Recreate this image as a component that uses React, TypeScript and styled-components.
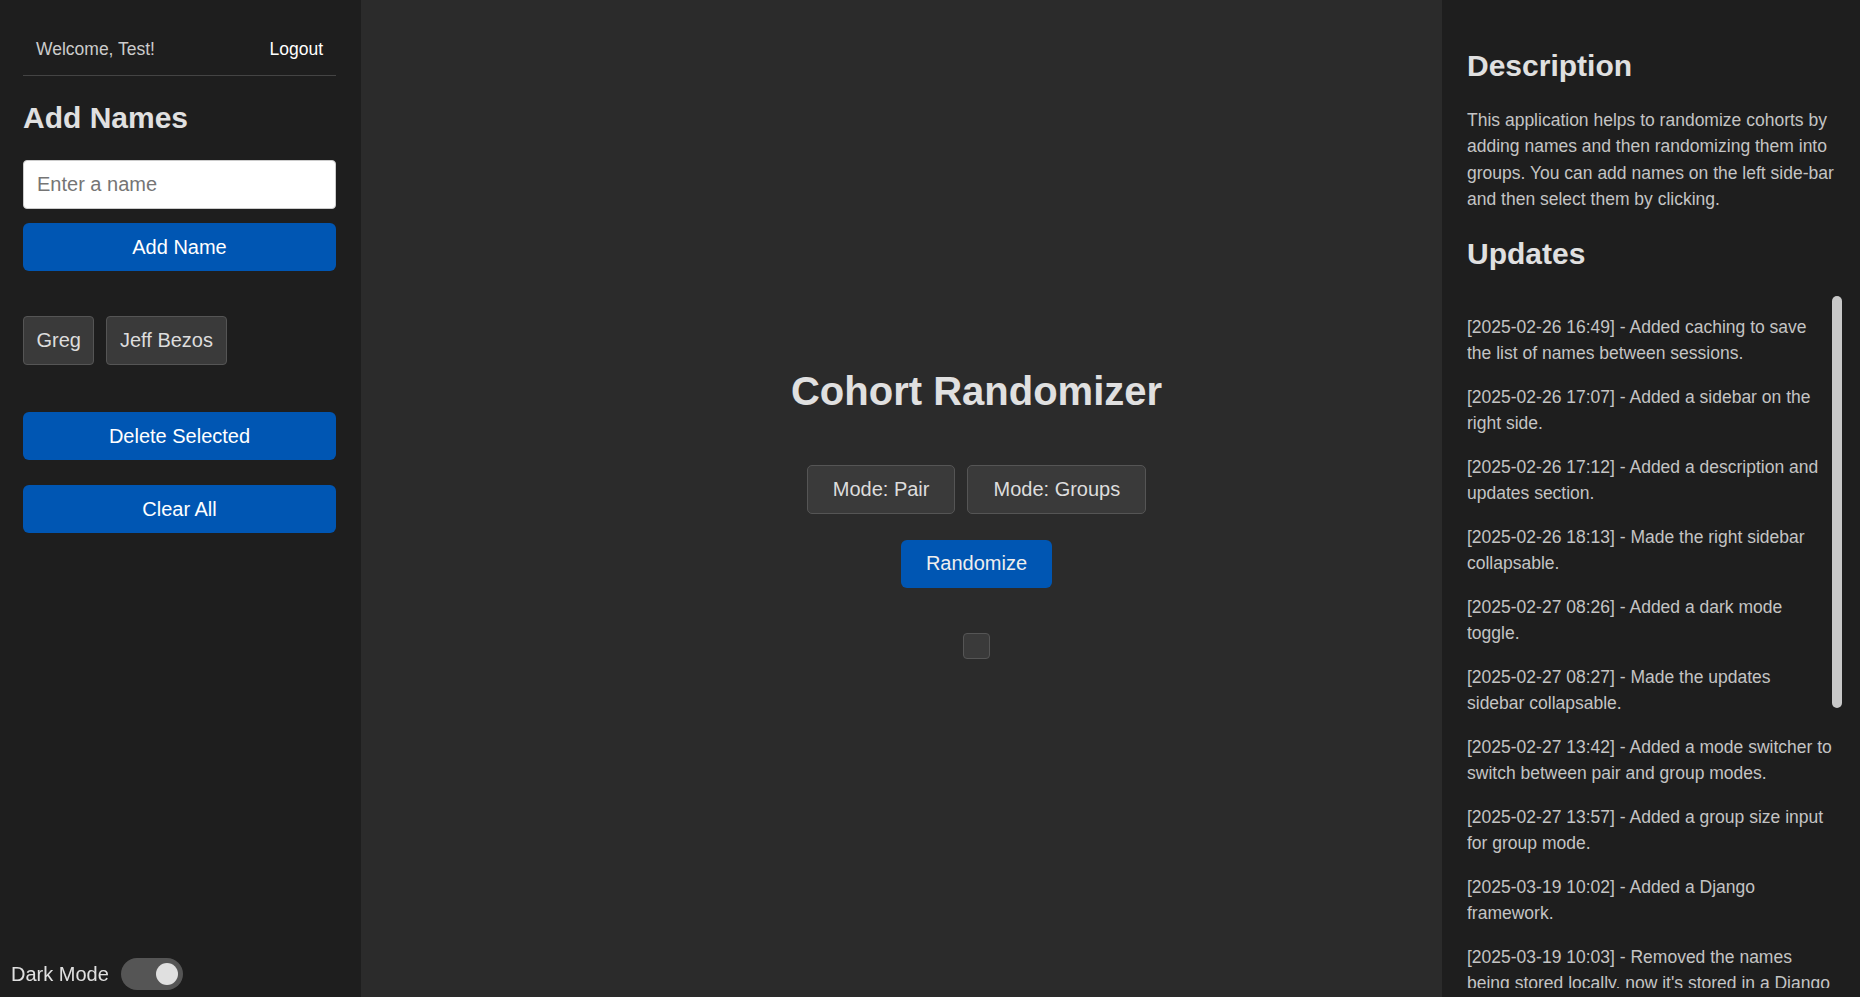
import styled, { createGlobalStyle } from 'styled-components';

const updates = [
  '[2025-02-26 16:49] - Added caching to save the list of names between sessions.',
  '[2025-02-26 17:07] - Added a sidebar on the right side.',
  '[2025-02-26 17:12] - Added a description and updates section.',
  '[2025-02-26 18:13] - Made the right sidebar collapsable.',
  '[2025-02-27 08:26] - Added a dark mode toggle.',
  '[2025-02-27 08:27] - Made the updates sidebar collapsable.',
  '[2025-02-27 13:42] - Added a mode switcher to switch between pair and group modes.',
  '[2025-02-27 13:57] - Added a group size input for group mode.',
  '[2025-03-19 10:02] - Added a Django framework.',
  "[2025-03-19 10:03] - Removed the names being stored locally, now it's stored in a Django database.",
  '[2025-03-19 10:40] - Added user accounts with login and logout.',
  '[2025-03-19 11:15] - Each user now has their own list of names.',
  '[2025-03-19 11:32] - Fixed the layout of the name buttons.',
  '[2025-03-19 12:05] - Added the Delete Selected and Clear All buttons.',
  '[2025-03-19 12:20] - Small style fixes for dark mode.',
  '[2025-03-19 12:48] - Added a checkbox under the randomize button.',
];

const names = ['Greg', 'Jeff Bezos'];

export default function App() {
  return (
    <>
      <GlobalStyle />
      <Layout>
        <LeftSidebar>
          <UserBar>
            <Welcome>Welcome, Test!</Welcome>
            <LogoutLink href="#">Logout</LogoutLink>
          </UserBar>

          <SectionTitle>Add Names</SectionTitle>
          <NameInput type="text" placeholder="Enter a name" />
          <PrimaryButton $top={14}>Add Name</PrimaryButton>

          <NameList>
            {names.map(name => (
              <NameChip key={name}>{name}</NameChip>
            ))}
          </NameList>

          <PrimaryButton $top={47}>Delete Selected</PrimaryButton>
          <PrimaryButton $top={25}>Clear All</PrimaryButton>
        </LeftSidebar>

        <Main>
          <Title>Cohort Randomizer</Title>
          <ModeRow>
            <ModeButton>Mode: Pair</ModeButton>
            <ModeButton>Mode: Groups</ModeButton>
          </ModeRow>
          <RandomizeButton>Randomize</RandomizeButton>
          <Check type="checkbox" />
        </Main>

        <RightSidebar>
          <SideTitle>Description</SideTitle>
          <Description>
            This application helps to randomize cohorts by adding names and then randomizing them
            into groups. You can add names on the left side-bar and then select them by clicking.
          </Description>
          <SideTitle>Updates</SideTitle>
          <UpdatesPanel>
            <UpdatesList>
              {updates.map(u => (
                <UpdateItem key={u}>{u}</UpdateItem>
              ))}
            </UpdatesList>
            <ScrollThumb />
          </UpdatesPanel>
        </RightSidebar>
      </Layout>

      <DarkModeToggle>
        <span>Dark Mode</span>
        <Switch>
          <Knob />
        </Switch>
      </DarkModeToggle>
    </>
  );
}

const GlobalStyle = createGlobalStyle`
  * {
    box-sizing: border-box;
  }
  body {
    margin: 0;
    background-color: #2b2b2b;
    font-family: "Liberation Sans", Arial, sans-serif;
    font-size: 20px;
    color: #e0e0e0;
    overflow: hidden;
  }
`;

const Layout = styled.div`
  display: flex;
  height: 100vh;
`;

// 왼쪽 사이드바
const LeftSidebar = styled.aside`
  width: 361px;
  flex-shrink: 0;
  padding: 23px 25px 23px 23px;
  background-color: #1e1e1e;
  display: flex;
  flex-direction: column;
`;

const UserBar = styled.div`
  display: flex;
  justify-content: space-between;
  align-items: center;
  padding: 15.5px 13px;
  border-bottom: 1px solid #444;
  font-size: 17.5px;
`;

const Welcome = styled.span`
  color: #cccccc;
`;

const LogoutLink = styled.a`
  color: #ffffff;
  text-decoration: none;
`;

const SectionTitle = styled.h2`
  margin: 25px 0;
  font-size: 30px;
  font-weight: bold;
  color: #e0e0e0;
`;

const NameInput = styled.input`
  height: 49px;
  width: 100%;
  padding: 0 13px;
  border: 1px solid #ccc;
  border-radius: 4px;
  background: #ffffff;
  font-family: inherit;
  font-size: 20px;
  color: #222;

  &::placeholder {
    color: #757575;
  }
`;

const PrimaryButton = styled.button<{ $top: number }>`
  margin-top: ${props => props.$top}px;
  height: 48px;
  width: 100%;
  border: none;
  border-radius: 6px;
  background-color: #0056b3;
  color: #ffffff;
  font-family: inherit;
  font-size: 20px;
  cursor: pointer;
`;

const NameList = styled.div`
  display: flex;
  flex-wrap: wrap;
  gap: 12px;
  margin-top: 45px;
`;

const NameChip = styled.button`
  height: 49px;
  padding: 0 12.5px;
  background-color: #3a3a3a;
  border: 1px solid #555;
  border-radius: 4px;
  color: #dddddd;
  font-family: inherit;
  font-size: 20px;
`;

// 가운데
const Main = styled.main`
  flex: 1;
  display: flex;
  flex-direction: column;
  align-items: center;
  justify-content: center;
  padding-left: 150px;
`;

const Title = styled.h1`
  margin: 30.5px 0 0;
  font-size: 40px;
  font-weight: bold;
  color: #e0e0e0;
`;

const ModeRow = styled.div`
  display: flex;
  gap: 12px;
  margin-top: 50.5px;
`;

const ModeButton = styled.button`
  height: 49px;
  padding: 0 25px;
  background-color: #3a3a3a;
  border: 1px solid #555;
  border-radius: 5px;
  color: #dddddd;
  font-family: inherit;
  font-size: 20px;
`;

const RandomizeButton = styled.button`
  margin-top: 26px;
  height: 48px;
  padding: 0 25px;
  border: none;
  border-radius: 6px;
  background-color: #0056b3;
  color: #eeeeee;
  font-family: inherit;
  font-size: 20px;
`;

const Check = styled.input`
  appearance: none;
  margin: 45px 0 0;
  width: 27px;
  height: 26px;
  background-color: #3a3a3a;
  border: 1px solid #555;
  border-radius: 4px;
`;

// 오른쪽 사이드바
const RightSidebar = styled.aside`
  width: 418px;
  flex-shrink: 0;
  padding: 49px 16px 9px 25px;
  background-color: #1e1e1e;
  display: flex;
  flex-direction: column;
  overflow: hidden;
`;

const SideTitle = styled.h2`
  margin: 0 0 24px;
  font-size: 30px;
  font-weight: bold;
  color: #e0e0e0;
`;

const Description = styled.p`
  margin: 0 0 25px;
  font-size: 17.5px;
  line-height: 1.5;
  color: #c4c4c4;
`;

const UpdatesPanel = styled.div`
  position: relative;
  flex: 1;
  min-height: 0;
  margin-top: 1px;
`;

const UpdatesList = styled.div`
  height: 100%;
  overflow-y: auto;
  scrollbar-width: none;
  padding-right: 12px;
`;

const UpdateItem = styled.p`
  margin: 17.5px 0;
  font-size: 17.5px;
  line-height: 1.5;
  color: #c4c4c4;
`;

// 스크롤바 (헤드리스에서 안 보여서 직접 그림)
const ScrollThumb = styled.div`
  position: absolute;
  top: 0;
  right: 2px;
  width: 10px;
  height: 412px;
  border-radius: 5px;
  background-color: #c8c8c8;
`;

const DarkModeToggle = styled.label`
  position: fixed;
  left: 11px;
  bottom: 7px;
  display: flex;
  align-items: center;
  gap: 12px;
  font-size: 20px;
  color: #e0e0e0;
`;

const Switch = styled.span`
  width: 62px;
  height: 32px;
  padding: 0 5px;
  border-radius: 16px;
  background-color: #555;
  display: flex;
  align-items: center;
  justify-content: flex-end;
`;

const Knob = styled.span`
  width: 22px;
  height: 22px;
  border-radius: 50%;
  background-color: #e0e0e0;
`;
